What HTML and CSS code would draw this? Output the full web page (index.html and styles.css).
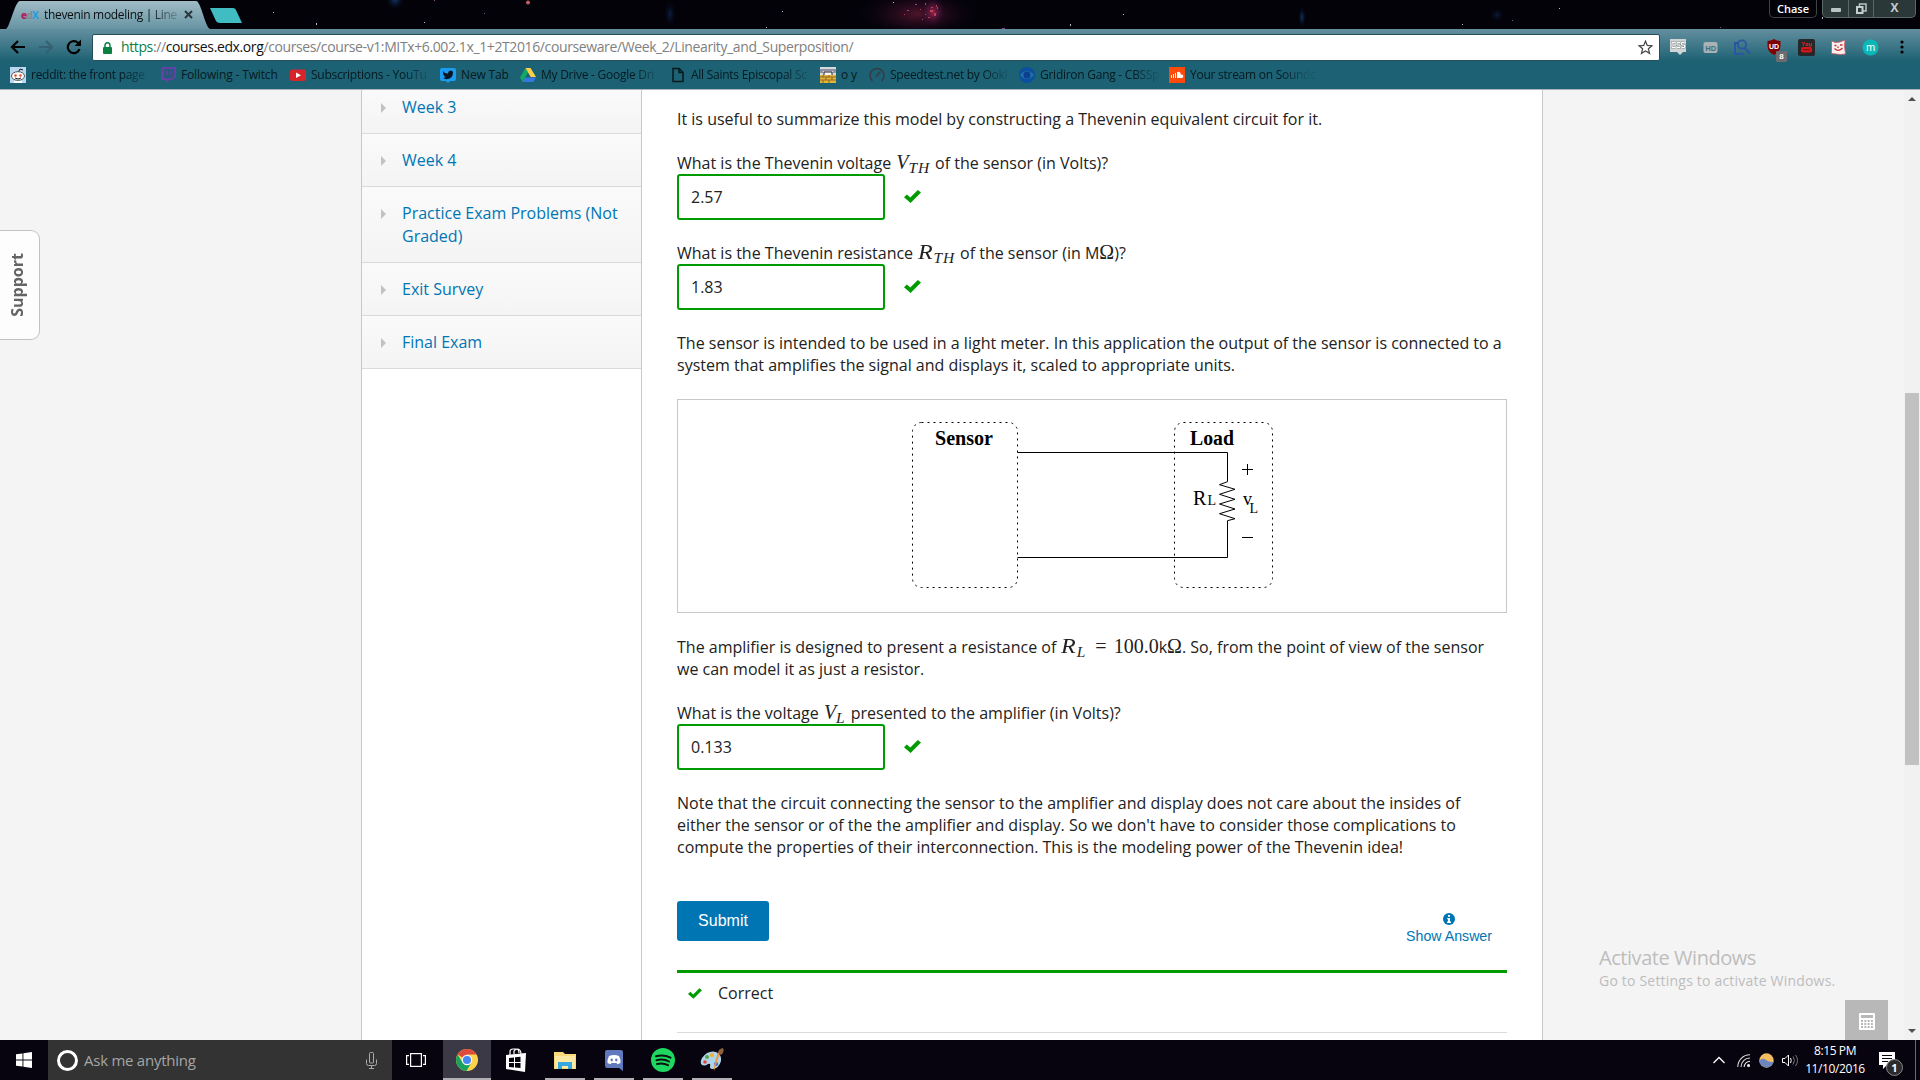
FILE: index.html
```html
<!DOCTYPE html>
<html lang="en">
<head>
<meta charset="utf-8">
<title>thevenin modeling | Linearity and Superposition</title>
<link rel="stylesheet" href="styles.css">
</head>
<body>
<svg class="defs" width="0" height="0" aria-hidden="true">
  <symbol id="check" viewBox="0 0 17 13"><path d="M0 7.2 2.8 4.4 6.3 7.6 13.8 0 17 2.6 6.600 13z" fill="#009b00"/></symbol>
</svg>

<header class="browser">
  <div class="titlebar">
    <svg class="stars" width="1920" height="29" viewBox="0 0 1920 29">
      <defs>
        <radialGradient id="neb"><stop offset="0" stop-color="#a52a4c" stop-opacity=".85"/><stop offset=".5" stop-color="#58173f" stop-opacity=".5"/><stop offset="1" stop-color="#160620" stop-opacity="0"/></radialGradient>
        <radialGradient id="blue"><stop offset="0" stop-color="#14407c" stop-opacity=".8"/><stop offset="1" stop-color="#050618" stop-opacity="0"/></radialGradient>
      </defs>
      <ellipse cx="918" cy="14" rx="60" ry="24" fill="url(#neb)" opacity=".55"/>
      <ellipse cx="933" cy="12" rx="13" ry="16" fill="url(#neb)"/>
      <circle cx="395" cy="0" r="10" fill="url(#blue)"/>
      <ellipse cx="670" cy="14" rx="6" ry="14" fill="url(#blue)" opacity=".6"/>
      <ellipse cx="1302" cy="17" rx="4" ry="11" fill="url(#blue)"/>
      <circle cx="1497" cy="15" r="8" fill="url(#blue)" opacity=".5"/>
      <circle cx="528" cy="2.500" r="2" fill="#c65f66"/>
      <g fill="#b9b9cc"><path d="M273 12h1v1h-1zM316 23h1v2h-1zM424 22h1v1h-1zM766 27h1v1h-1zM782 11h1v1h-1zM893 2h1v1h-1zM1070 24h1v2h-1zM1123 14h1v1h-1zM1462 24h1v1h-1zM1559 8h1v1h-1zM1822 17h1v2h-1z"/></g>
      <g fill="#8a4a8e"><path d="M434 0h1v1h-1zM484 13h1v1h-1zM915 4h2v1h-2zM925 3h1v2h-1zM907 10h2v1h-2zM937 7h1v2h-1zM922 19h1v1h-1zM1002 28h3v1h-3zM1512 20h1v1h-1zM1720 27h1v1h-1z"/></g>
      <g fill="#e0486a"><path d="M930 10h3v2h-3zM934 13h2v3h-2zM928 17h2v1h-2zM936 5h1v2h-1zM931 7h2v1h-2zM925 14h1v1h-1zM920 9h1v1h-1zM904 14h1v1h-1z" opacity=".75"/></g>
    </svg>
    <div class="tab">
      <svg class="tabshape" width="204" height="28" viewBox="0 0 204 28"><defs><linearGradient id="tg" x2="0" y2="1"><stop offset="0" stop-color="#a0bcc6"/><stop offset="1" stop-color="#6794a3"/></linearGradient></defs><path d="M0 28C4 26 9 0 14 0H190C195 0 199 26 204 28z" fill="url(#tg)"/></svg>
      <span class="favicon"><b>e</b><i>d</i><em>X</em></span>
      <span class="tabtitle">thevenin modeling | Line</span>
      <svg class="tabclose" width="9" height="9" viewBox="0 0 9 9"><path d="M1 1l7 7M8 1L1 8" stroke="#27383f" stroke-width="2"/></svg>
    </div>
    <svg class="newtab" width="33" height="15" viewBox="0 0 33 15"><path d="M0 0h23q2 0 3 2l6 13H10q-3 0-4-2z" fill="#41bcc3"/></svg>
    <span class="profile">Chase</span>
    <div class="winbtns">
      <span class="wb"><svg width="12" height="18" viewBox="0 0 12 18"><rect x="1" y="8" width="10" height="4" rx="1" fill="#b9c3c3"/></svg></span>
      <span class="wb"><svg width="12" height="18" viewBox="0 0 12 18"><path d="M4.500 7V4h6.500v7H8" fill="none" stroke="#b9c3c3" stroke-width="1.500"/><rect x="2" y="7" width="5.500" height="6" fill="none" stroke="#c5cfcf" stroke-width="2"/></svg></span>
      <span class="wb wide">X</span>
    </div>
  </div>

  <div class="toolbar">
    <svg class="nav" width="16" height="16" viewBox="0 0 16 16"><path d="M15 8H2M8 2L2 8l6 6" fill="none" stroke="#000" stroke-width="2.200"/></svg>
    <svg class="nav" width="16" height="16" viewBox="0 0 16 16"><path d="M1 8h13M8 2l6 6-6 6" fill="none" stroke="#346170" stroke-width="2"/></svg>
    <svg class="nav" width="16" height="16" viewBox="0 0 16 16"><path d="M13.500 10A6 6 0 1 1 12 3.800" fill="none" stroke="#000" stroke-width="2.200"/><path d="M15 .5V7H8.500z"/></svg>
    <div class="omnibox">
      <svg width="9" height="12" viewBox="0 0 9 12"><rect y="5" width="9" height="7" rx="1" fill="#0b8043"/><path d="M2 5V3.200a2.500 2.500 0 0 1 5 0V5" fill="none" stroke="#0b8043" stroke-width="1.500"/></svg>
      <span class="url"><span class="sec">https</span>://<span class="host">courses.edx.org</span>/courses/course-v1:MITx+6.002.1x_1+2T2016/courseware/Week_2/Linearity_and_Superposition/</span>
      <svg class="star" width="15" height="15" viewBox="0 0 15 15"><path d="M7.500 1.200l1.800 4.200 4.600.4-3.500 3 1.100 4.500-4-2.400-4 2.400 1.100-4.500-3.500-3 4.600-.4z" fill="none" stroke="#4a4a4a" stroke-width="1.300"/></svg>
    </div>
    <div class="exts">
      <svg width="17" height="17" viewBox="0 0 17 17"><path d="M0 0h16v13h-3l-3 3-3-3H0z" fill="#d0d4d4"/><path d="M5.500 3.500H2v5h3.500M10 3.500H7V6h3v2.500H7M14.500 3.500h-3V6h3v2.500h-3" fill="none" stroke="#858b8c" stroke-width="1.800"/><path d="M5.500 3.500H2v5h3.500M10 3.500H7V6h3v2.500H7M14.500 3.500h-3V6h3v2.500h-3" fill="none" stroke="#fff"/></svg>
      <svg width="17" height="17" viewBox="0 0 17 17"><rect x="1.500" y="3" width="14" height="11" rx="2" fill="#a9b2b5"/><text x="3.300" y="11.500" font-size="7.500" font-weight="bold" fill="#396f80">HD</text></svg>
      <svg width="17" height="17" viewBox="0 0 17 17"><path d="M4.500 4H1v11h9M10.500 9l5.500 5.500" fill="none" stroke="#2b55a0" stroke-width="2"/><circle cx="8" cy="5.500" r="4.200" fill="none" stroke="#2b55a0" stroke-width="1.800"/></svg>
      <span class="ublock"><svg width="17" height="17" viewBox="0 0 17 17"><path d="M8 0q3 2 6.500 2v5q0 6-6.500 9Q1.500 13 1.500 7V2Q5 2 8 0" fill="#800000"/><text x="3" y="9.500" font-size="7" font-weight="bold" fill="#fff">UD</text></svg><b class="badge">8</b></span>
      <svg width="17" height="17" viewBox="0 0 17 17"><rect width="17" height="17" rx="2" fill="#252729"/><path d="M4 3l1.500 2L7 3M5.500 5v2M8 4.500h2v2H8zM11.500 4v3h2V4" stroke="#d32424" fill="none"/><rect x="3" y="8" width="11" height="5.500" rx="2" fill="#d3191c"/><path d="M5 10.700h7" stroke="#6b1010"/></svg>
      <svg width="17" height="17" viewBox="0 0 17 17"><path d="M1.500 2l4 1.500L10 3l5-2-.5 6 1 8-5 .5-9-1z" fill="#fbeeee" stroke="#d0525a" stroke-width=".8"/><path d="M4.500 6.500h2M10 6h2.500M4.500 9.500q4 4 8-.5M8 7.500v1.500" fill="none" stroke="#c93039" stroke-width="1.300"/></svg>
      <svg width="17" height="17" viewBox="0 0 17 17"><circle cx="8.500" cy="8.500" r="8" fill="#08b9b7"/><text x="4" y="12" font-size="11" fill="#fff">m</text></svg>
    </div>
    <svg class="menu" width="4" height="14" viewBox="0 0 4 14"><circle cx="2" cy="2" r="1.600"/><circle cx="2" cy="7" r="1.600"/><circle cx="2" cy="12" r="1.600"/></svg>
  </div>

  <nav class="bookmarks">
    <a class="bm"><svg width="16" height="16" viewBox="0 0 16 16"><rect width="16" height="16" fill="#b9d7ef"/><path d="M8 6l2-4 3 1" fill="none" stroke="#222"/><ellipse cx="8" cy="9" rx="6.500" ry="4.300" fill="#fff" stroke="#333" stroke-width=".8"/><circle cx="5.500" cy="8.500" r="1.300" fill="#f3471d"/><circle cx="10.500" cy="8.500" r="1.300" fill="#f3471d"/><path d="M5 11q3 2 6 0" fill="none" stroke="#222"/><path d="M4 14h8v2H4z" fill="#fff"/></svg><span>reddit: the front page</span></a>
    <a class="bm twitch"><svg width="16" height="16" viewBox="0 0 16 16"><path d="M2 0h14v10l-4 3H9l-3 3v-3H1V3z" fill="#6441a5"/><path d="M4 2h10v7l-2 2H9l-2 1.500V11H4z" fill="#275a79"/><path d="M7 4v4M11 4v4" stroke="#6441a5" stroke-width="1.500"/></svg><span>Following - Twitch</span></a>
    <a class="bm"><svg width="16" height="16" viewBox="0 0 16 16"><rect y="2.500" width="16" height="11.500" rx="2" fill="#d9252a"/><path d="M6 5.500l5 2.700-5 2.800z" fill="#fff"/></svg><span>Subscriptions - YouTu</span></a>
    <a class="bm short"><svg width="16" height="16" viewBox="0 0 16 16"><path d="M2 1h12q2 0 2 2v9q0 2-2 2h-4l-2 2-2-2H2q-2 0-2-2V3q0-2 2-2" fill="#1c9cf0"/><path d="M3 4q2 3 5 2.500Q8 4 10.500 3.500q2 0 2.500 1.500 0 6-5 7-3 .5-5-1 2 0 2.500-1Q3 9 3 4" fill="#0a1520"/></svg><span>New Tab</span></a>
    <a class="bm"><svg width="16" height="16" viewBox="0 0 16 16"><path d="M5.500 1L0 10.500 2.700 15 8 5.500z" fill="#11a861"/><path d="M5.500 1h5L16 10h-5.300z" fill="#ffcf48"/><path d="M5.300 10.500H16L13.300 15H2.700z" fill="#3777e3"/></svg><span>My Drive - Google Dri</span></a>
    <a class="bm"><svg width="16" height="16" viewBox="0 0 16 16"><path d="M3 1.500h6l4 4v9H3zM9 1.500v4h4" fill="none" stroke="#06181d" stroke-width="1.500"/></svg><span>All Saints Episcopal Sc</span></a>
    <a class="bm oy"><svg width="16" height="16" viewBox="0 0 16 16"><path d="M0 0h16v8H0z" fill="#d8d8df"/><path d="M0 8h16v8H0z" fill="#e2b437"/><path d="M0 3h16M0 5h3M13 5h3" stroke="#444d66"/><path d="M4 8V5h8v3" fill="#f6f6f6" stroke="#222"/><path d="M0 10h16M0 13h16M3 8v2M9 8v2M6 10v3M12 10v3M3 13v3M9 13v3" stroke="#80551d" stroke-width=".8"/></svg><span>o y</span></a>
    <a class="bm"><svg width="16" height="16" viewBox="0 0 16 16"><path d="M3.500 14A7 7 0 1 1 12.500 14" fill="none" stroke="#333f49" stroke-width="1.700"/><path d="M7 10l4-5" stroke="#333f49" stroke-width="2"/></svg><span>Speedtest.net by Ookl</span></a>
    <a class="bm"><svg width="16" height="16" viewBox="0 0 16 16"><circle cx="8" cy="8" r="8" fill="#0c4fa0"/><path d="M1 8q7-8 14 0-7 8-14 0" fill="#23739d"/><circle cx="8" cy="8" r="3.500" fill="#0b3f90"/></svg><span>Gridiron Gang - CBSSp</span></a>
    <a class="bm"><svg width="16" height="16" viewBox="0 0 16 16"><rect width="16" height="16" fill="#ff4a0c"/><path d="M2.500 8v3M4.500 7v4M6.500 6v5" stroke="#fff"/><path d="M8 5q3.500-1 4 2.500 2.500 0 2.200 2-.2 1.500-1.700 1.500H8z" fill="#fff"/></svg><span>Your stream on Soundc</span></a>
  </nav>
</header>

<main class="page">
  <div class="gutter left"><div class="support"><span>Support</span></div></div>
  <aside class="sidebar">
    <a class="chap first">Week 3</a>
    <a class="chap">Week 4</a>
    <a class="chap">Practice Exam Problems (Not Graded)</a>
    <a class="chap">Exit Survey</a>
    <a class="chap">Final Exam</a>
  </aside>
  <section class="content">
    <p>It is useful to summarize this model by constructing a Thevenin equivalent circuit for it.</p>
    <p class="q">What is the Thevenin voltage <span class="math">V<sub>TH</sub></span> of the sensor (in Volts)?</p>
    <div class="answer"><span class="field">2.57</span><svg width="17" height="13"><use href="#check"/></svg></div>
    <p class="q">What is the Thevenin resistance <span class="math"><span class="wide-r">R</span><sub>TH</sub></span> of the sensor (in M<span class="rm">Ω</span>)?</p>
    <div class="answer"><span class="field">1.83</span><svg width="17" height="13"><use href="#check"/></svg></div>
    <p>The sensor is intended to be used in a light meter. In this application the output of the sensor is connected to a<br>system that amplifies the signal and displays it, scaled to appropriate units.</p>
    <div class="figure">
      <svg width="384" height="212" viewBox="0 0 384 212" fill="none" stroke="#000">
        <rect x="12.500" y="22.500" width="105" height="165" rx="9" stroke-dasharray="2 4"/>
        <rect x="274.500" y="22.500" width="98" height="165" rx="9" stroke-dasharray="2 4"/>
        <path d="M117.500 52.500H327.500V81.700L319.500 84.700 335 89.300 319.500 94.300 335 99.300 319.500 104 335 109 319.500 113.700 335 118.700 327.500 120.700V157.500H117.500M342 69.500H353M347.500 64V75M342 137.500H353"/>
        <g class="circuit-text" fill="#000" stroke="none">
          <text x="35" y="45" font-weight="bold" font-size="20" textLength="58" lengthAdjust="spacingAndGlyphs">Sensor</text>
          <text x="290" y="45" font-weight="bold" font-size="20" textLength="44" lengthAdjust="spacingAndGlyphs">Load</text>
          <text x="293" y="105" font-size="20">R</text><text x="307.500" y="105" font-size="14">L</text>
          <text x="343" y="105" font-size="18">v</text><text x="349.500" y="113" font-size="14">L</text>
        </g>
      </svg>
    </div>
    <p>The amplifier is designed to present a resistance of <span class="math"><span class="wide-r">R</span><sub>L</sub></span> <span class="rm eq">=</span> <span class="rm">100.0</span>k<span class="rm">Ω</span>. So, from the point of view of the sensor<br>we can model it as just a resistor.</p>
    <p class="q">What is the voltage <span class="math">V<sub>L</sub></span> presented to the amplifier (in Volts)?</p>
    <div class="answer"><span class="field">0.133</span><svg width="17" height="13"><use href="#check"/></svg></div>
    <p>Note that the circuit connecting the sensor to the amplifier and display does not care about the insides of<br>either the sensor or of the the amplifier and display. So we don't have to consider those complications to<br>compute the properties of their interconnection. This is the modeling power of the Thevenin idea!</p>
    <div class="actions">
      <span class="submit">Submit</span>
      <span class="show"><svg width="12" height="12" viewBox="0 0 12 12"><circle cx="6" cy="6" r="6" fill="#0075b4"/><path d="M5 2h2v1.700H5zM4.200 5H7v3.600h1V10H4V8.600h1V6.300h-.8z" fill="#fff"/></svg>Show Answer</span>
    </div>
    <div class="status"><svg width="14" height="11"><use href="#check"/></svg>Correct</div>
  </section>
  <div class="gutter right">
    <div class="watermark"><div class="w1">Activate Windows</div><div class="w2">Go to Settings to activate Windows.</div></div>
    <div class="calc"><svg width="16" height="17" viewBox="0 0 16 17"><rect width="16" height="17" rx="1" fill="#fff"/><path d="M2 2h12v3H2z" fill="#b8b8b8"/><path d="M2 8h12M2 11h12M2 14h12" stroke="#b8b8b8" stroke-width="2" stroke-dasharray="2 1.300"/></svg></div>
  </div>
  <div class="scroll"><i class="up"></i><span class="thumb"></span><i class="down"></i></div>
</main>

<footer class="taskbar">
  <div class="start"><svg width="16" height="16" viewBox="0 0 16 16" fill="#fff"><path d="M0 2.300L6.500 1.400V7.600H0zM7.400 1.200L16 0V7.600H7.400zM0 8.400H6.500V14.600L0 13.700zM7.400 8.400H16V16L7.400 14.800z"/></svg></div>
  <div class="search"><i class="ring"></i><span>Ask me anything</span><svg width="11" height="17" viewBox="0 0 11 17" fill="none" stroke="#aaa"><rect x="3.500" y=".5" width="4" height="10.500" rx="1"/><path d="M.5 7.500v4q0 2 2 2h6q2 0 2-2v-4M5.500 13.500v3M3 16.500h5"/></svg></div>
  <div class="app"><svg width="20" height="14" viewBox="0 0 20 14" fill="none" stroke="#fff" stroke-width="1.200"><rect x="4.600" y=".6" width="10.800" height="12.800"/><path d="M3 2.600H.6v8.800H3M17 2.600h2.400v8.800H17"/></svg></div>
  <div class="app active run"><svg width="22" height="22" viewBox="0 0 22 22"><circle cx="11" cy="11" r="11" fill="#fdd34c"/><path d="M11 11L1.500 5.500A11 11 0 0 1 20.500 5.500H11z" fill="#dd4b3e"/><path d="M1.500 5.500A11 11 0 0 0 10.500 22L15.500 13.500 11 11 6.500 13.500z" fill="#1aa15f"/><circle cx="11" cy="11" r="5.200" fill="#fff"/><circle cx="11" cy="11" r="4.100" fill="#4587f3"/></svg></div>
  <div class="app"><svg width="22" height="24" viewBox="0 0 22 24"><path d="M5 7V3.500Q5 1 8 1h3q3 0 3 4M9 6V3q1-2 4-2 3 1 3 5" fill="none" stroke="#fff" stroke-width="1.200"/><path d="M1 7l20-2-1 19-19-3z" fill="#fff"/><path d="M4 10l5-.5V14H4zM10 9.300l5.500-.5V14H10zM4 15h5v4.500L4 19zM10 15h5.500v5L10 19.500z" fill="#07040f"/></svg></div>
  <div class="app run"><svg width="22" height="19" viewBox="0 0 22 19"><path d="M0 1h9l2 2h11v15H0z" fill="#fbd979"/><path d="M1 5h20v12H1z" fill="#ffe9a2"/><path d="M4 18v-7h14v7h-4v-3H8v3z" fill="#36a8e0"/></svg></div>
  <div class="app run"><svg width="20" height="21" viewBox="0 0 20 21"><path d="M3 0h14q2 0 2 2v19l-4-3H3q-2 0-2-2V2q0-2 2-2" fill="#6078be"/><path d="M5 6q5-2 10 0 2 4 1.500 7l-3 1.300-1-1.300h-5l-1 1.300-3-1.300Q3 10 5 6" fill="#fff"/><ellipse cx="7.700" cy="10" rx="1.200" ry="1.400" fill="#6078be"/><ellipse cx="12.300" cy="10" rx="1.200" ry="1.400" fill="#6078be"/></svg></div>
  <div class="app run"><svg width="24" height="24" viewBox="0 0 24 24"><circle cx="12" cy="12" r="12" fill="#1ed760"/><path d="M5 8.200q8-2 14.500 1.500M5.500 12.200q7-1.800 12.500 1.300M6 16q6-1.500 11 1.200" fill="none" stroke="#0a150f" stroke-width="2" stroke-linecap="round"/></svg></div>
  <div class="app run"><svg width="24" height="24" viewBox="0 0 24 24"><path d="M2 10Q8 2 16 4q6 3 5 9-2 7-8 8-3 0-3-2 1-4-2-3-4 3-7 0-1-3 1-6" fill="#aed3ea"/><circle cx="7" cy="9" r="2" fill="#55a83b"/><circle cx="12" cy="7" r="2" fill="#f0af31"/><circle cx="5" cy="14" r="1.800" fill="#dc463c"/><circle cx="16" cy="16" r="2" fill="#3b66bf"/><path d="M20 5l-5 15-1 3v-5l4-14z" fill="#e69842"/><path d="M18 5q0-4 5-5 2 4-2 7z" fill="#8e613f"/></svg></div>
  <div class="tray">
    <div class="icons">
      <svg width="12" height="8" viewBox="0 0 12 8"><path d="M.5 7L6 1.500 11.500 7" fill="none" stroke="#fff" stroke-width="1.300"/></svg>
      <svg class="wifi" width="13" height="13" viewBox="0 0 13 13" fill="none" stroke="#ddd" stroke-width="1.100"><path d="M.8 13A12 12 0 0 1 13 .8M4 13A9 9 0 0 1 13 4M7.200 13A6 6 0 0 1 13 7.200"/><circle cx="11.500" cy="11.500" r="1" fill="#fff"/></svg>
      <svg width="15" height="15" viewBox="0 0 15 15"><circle cx="7.500" cy="7.500" r="7.200" fill="#f5bd61"/><path d="M.3 7.500Q4 4.500 7 7t7.500 2A7.200 7.200 0 0 1 .3 7.500" fill="#6d86bd"/></svg>
      <svg width="17" height="13" viewBox="0 0 17 13" fill="none" stroke="#fff"><path d="M.5 4.500H3L6.500 1v11L3 8.500H.5zM8.500 4q1.500 2.500 0 5"/><path d="M11 2.500q3 4 0 8M13.500 1q4 5.500 0 11" stroke="#777"/></svg>
    </div>
    <div class="clock">8:15 PM<br>11/10/2016</div>
    <div class="notif"><svg width="16" height="17" viewBox="0 0 16 17"><path d="M0 0h16v13H8l-4 4v-4H0z" fill="#fff"/><path d="M3 3.500h10M3 6.500h10M3 9.500h6" stroke="#07040f"/></svg><b>1</b></div>
  </div>
</footer>
</body>
</html>
```
FILE: styles.css
```css
* { box-sizing: border-box; }
body { margin: 0; width: 1920px; height: 1080px; overflow: hidden; display: flex; flex-direction: column; font-family: "Open Sans", "Noto Sans", sans-serif; font-size: 16px; color: #222; background: #f4f4f4; }
svg { display: block; flex: none; }
.defs { position: absolute; }

/* browser chrome */
.browser { height: 90px; flex: none; background: #1d6274; border-bottom: 1px solid #a9b3b8; }
.titlebar { height: 29px; position: relative; display: flex; background: #030209; overflow: hidden; padding-left: 6px; }
.stars { position: absolute; left: 0; top: 0; }
.tab { position: relative; width: 204px; height: 28px; margin-top: 1px; display: flex; align-items: center; padding: 0 17px 1px 15px; font-size: 12px; color: #0b0f11; }
.tabshape { position: absolute; left: 0; top: 0; }
.favicon { position: relative; width: 17px; font-size: 10px; line-height: 14px; letter-spacing: -.8px; font-weight: bold; display: flex; }
.favicon b { color: #b3205f; }
.favicon i { color: #808a90; font-style: normal; }
.favicon em { color: #1d9de0; font-style: normal; }
.tabtitle { position: relative; margin-left: 6px; width: 136px; white-space: nowrap; letter-spacing: -.32px; -webkit-mask-image: linear-gradient(90deg, #000 105px, rgba(0, 0, 0, .2) 133px); }
.tabclose { position: relative; margin-left: 4px; }
.newtab { position: relative; margin-top: 8px; }
.profile { position: relative; margin-left: auto; width: 48px; height: 18px; border: 1px solid #3f4444; border-top: 0; border-radius: 0 0 5px 5px; color: #fff; font-size: 11px; font-weight: 600; line-height: 18px; text-align: center; }
.winbtns { position: relative; display: flex; height: 18px; margin: 0 4px 0 5px; border: 1px solid #596968; border-top: 0; border-radius: 0 0 5px 5px; overflow: hidden; background: #2b3838; }
.wb { width: 25px; display: flex; justify-content: center; color: #c2cccc; font-weight: bold; font-size: 12px; line-height: 16px; }
.wb + .wb { border-left: 1px solid #596968; }
.wb.wide { width: 42px; }

.toolbar { height: 32px; display: flex; align-items: center; background: linear-gradient(#638f9f, #1d6274); padding: 4px 16px 0 10px; }
.nav { margin-right: 12px; }
.nav + .nav + .nav { margin-right: 10px; }
.omnibox { width: 1568px; height: 27px; background: #fff; border: 1px solid #274e5b; border-radius: 2px; display: flex; align-items: center; padding: 0 6px 0 10px; font-size: 14px; margin-top: 1px; }
.url { margin-left: 9px; color: #808080; white-space: nowrap; letter-spacing: -.385px; line-height: 20px; padding-bottom: 2px; }
.sec { color: #0b8043; }
.host { color: #111; }
.star { margin-left: auto; }
.exts { display: flex; gap: 15px; margin-left: 10px; font-family: "Liberation Sans", sans-serif; }
.ublock { position: relative; }
.badge { position: absolute; left: 10px; top: 12px; width: 11px; height: 11px; background: #6b6b70; color: #fff; font-size: 8px; line-height: 11px; text-align: center; border-radius: 1px; }
.menu { margin-left: auto; }

.bookmarks { height: 28px; display: flex; align-items: center; padding: 0 0 1px 10px; font-size: 12px; color: #041a20; }
.bm { width: 150px; flex: none; display: flex; align-items: center; gap: 5px; white-space: nowrap; }
.bm span { width: 128px; letter-spacing: -.26px; -webkit-mask-image: linear-gradient(90deg, #000 92px, rgba(0, 0, 0, .15) 118px); }
.bm.short { width: 80px; }
.bm.twitch { width: 130px; }
.bm.short span, .bm.oy span, .bm.twitch span { width: auto; -webkit-mask-image: none; letter-spacing: -.15px; }
.bm.oy { width: 49px; }

/* course page */
.page { height: 950px; display: flex; flex: none; background: #f4f4f4; }
.gutter.left { width: 361px; }
.support { width: 40px; height: 110px; margin-top: 140px; background: #fdfdfd; border: 1px solid #c2c2c2; border-left: 0; border-radius: 0 9px 9px 0; display: flex; align-items: center; justify-content: center; }
.support span { writing-mode: vertical-rl; transform: rotate(180deg); font-weight: bold; font-size: 16px; color: #646464; padding-left: 6px; }
.sidebar { width: 281px; background: #fff; border-left: 1px solid #c8c8c8; border-right: 1px solid #c8c8c8; }
.chap { position: relative; display: block; padding: 15px 19px 14px 40px; line-height: 23px; color: #0075b4; background: linear-gradient(#fafafa, #f4f4f4); border-bottom: 1px solid #dadada; }
.chap.first { padding-top: 6px; }
.chap::before { content: ""; position: absolute; left: 19px; top: 22px; border: 5px solid transparent; border-left: 5px solid #c2c2c2; border-right: 0; }
.chap.first::before { top: 13px; }
.content { width: 901px; background: #fff; border-right: 1px solid #c8c8c8; padding: 18px 35px 0; overflow: hidden; }
p { margin: 0 0 22px; line-height: 22px; white-space: nowrap; }
p.q { margin-bottom: 0; }
.math { font: italic 20px/10px "Liberation Serif", serif; margin-left: 1px; }
.math sub { font-size: 15.500px; line-height: 0; vertical-align: -4px; margin-right: 1px; letter-spacing: .8px; }
.wide-r { display: inline-block; transform: scaleX(1.2); transform-origin: left; margin-right: 3px; }
.rm { font: 20px/10px "Liberation Serif", serif; }
.eq { margin: 0 3px 0 4px; }
.answer { display: flex; align-items: center; height: 46px; margin-bottom: 22px; gap: 19px; }
.answer svg { margin-bottom: 1px; }
.field { width: 208px; height: 46px; border: 2px solid #009b00; border-radius: 3px; padding-left: 12px; line-height: 42px; }
.figure { height: 214px; margin: 23px 0; border: 1px solid #c8c8c8; display: flex; justify-content: center; }
.circuit-text { font-family: "Liberation Serif", serif; }
.actions { display: flex; justify-content: space-between; height: 40px; margin-top: 43px; font-family: "Liberation Sans", sans-serif; }
.submit { width: 92px; height: 40px; background: #0075b4; color: #fff; border-radius: 3px; text-align: center; line-height: 39px; }
.show { display: flex; flex-direction: column; align-items: center; gap: 2px; padding: 12px 15px 0 0; color: #0075b4; font-size: 14.200px; line-height: 18px; }
.status { margin-top: 29px; border-top: 3px solid #009b00; border-bottom: 1px solid #dcdcdc; height: 63px; display: flex; padding-left: 11px; gap: 16px; line-height: 40px; }
.status svg { margin-top: 15px; }
.gutter.right { width: 361px; display: flex; flex-direction: column; padding: 856px 16px 0 56px; }
.watermark { color: #bdbdbd; white-space: nowrap; }
.w1 { font-size: 20px; line-height: 23px; letter-spacing: -.45px; }
.w2 { font-size: 14px; line-height: 24px; letter-spacing: .2px; }
.calc { width: 43px; height: 40px; margin: 7px 0 0 auto; background: #b8b8b8; display: flex; align-items: center; justify-content: center; padding-top: 2px; }
.scroll { width: 16px; background: #f1f1f1; display: flex; flex-direction: column; align-items: center; padding: 7px 0; }
.up { border: 4px solid transparent; border-top: 0; border-bottom-color: #505050; }
.down { border: 4px solid transparent; border-bottom: 0; border-top-color: #505050; margin-top: auto; }
.thumb { width: 14px; height: 372px; margin-top: 292px; background: #c1c1c1; }

/* taskbar */
.taskbar { height: 40px; flex: none; display: flex; background: #07040f; color: #fff; }
.start { width: 48px; display: flex; align-items: center; justify-content: center; }
.search { width: 344px; background: #333; display: flex; align-items: center; padding: 0 15px 0 9px; color: #a5a5a5; font-size: 15px; }
.search span { margin: 0 auto 0 6px; letter-spacing: -.25px; }
.ring { width: 21px; height: 21px; border: 3px solid #fff; border-radius: 50%; }
.app { width: 48px; margin-right: 1px; display: flex; align-items: center; justify-content: center; position: relative; }
.app + .app.active { background: #3b3945; margin-left: 2px; }
.run::after { content: ""; position: absolute; left: 4px; right: 4px; bottom: 0; height: 2px; background: #b2b0b5; }
.run.active::after { left: 0; right: 0; }
.tray { margin-left: auto; display: flex; align-items: center; padding-right: 4px; }
.icons { display: flex; align-items: center; gap: 8px; margin-right: 4px; }
.icons .wifi { margin: 0 1px 0 4px; }
.clock { width: 64px; font-size: 12px; line-height: 18px; text-align: center; letter-spacing: -.4px; white-space: nowrap; }
.notif { position: relative; width: 37px; margin-left: 12px; height: 40px; padding-top: 12px; border-right: 1px solid #6a6870; }
.notif b { position: absolute; left: 7px; top: 19px; width: 17px; height: 17px; border: 1px solid #888; border-radius: 50%; background: #2b2b2d; font-size: 11px; line-height: 15px; text-align: center; }
```
